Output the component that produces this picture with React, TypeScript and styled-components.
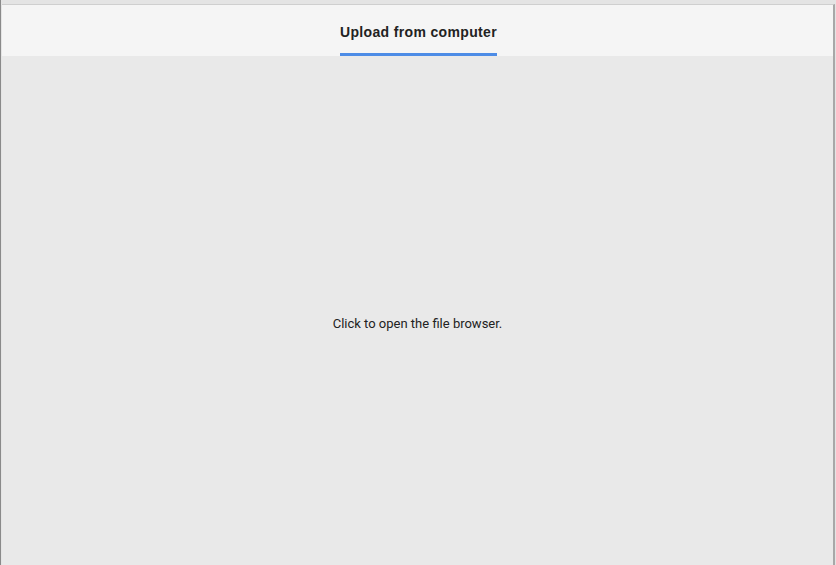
import styled, { createGlobalStyle } from "styled-components";

const Global = createGlobalStyle`
  html, body {
    margin: 0;
    padding: 0;
    background: #e4e4e4;
  }
  #root {
    height: 565px;
  }
`;

const Frame = styled.div`
  height: 565px;
  box-sizing: border-box;
  padding: 4px 1px 0 1px;
  border-left: 1px solid #8a8a8a;
  background: #e4e4e4;
  display: flex;
`;

const Dialog = styled.div`
  flex: 1;
  display: flex;
  flex-direction: column;
  border-top: 1px solid #cfcfcf;
  border-right: 2px solid #a8a8a8;
  background: #e9e9e9;
`;

const TabBar = styled.div`
  height: 51px;
  background: #f5f5f5;
  display: flex;
  justify-content: center;
  align-items: stretch;
`;

const Tab = styled.div<{ $active?: boolean }>`
  display: flex;
  align-items: center;
  box-sizing: border-box;
  padding-top: 6px;
  margin-left: 2px;
  font-family: Arial, "Liberation Sans", sans-serif;
  font-weight: bold;
  font-size: 14px;
  letter-spacing: 0.35px;
  color: #222;
  border-bottom: 3px solid ${(p) => (p.$active ? "#4d8ce6" : "transparent")};
`;

const DropArea = styled.div`
  flex: 1;
  display: flex;
  align-items: center;
  justify-content: center;
  padding-top: 26px;
  cursor: pointer;
`;

const Hint = styled.span`
  font-family: Roboto, "Liberation Sans", sans-serif;
  font-size: 13px;
  color: #222;
`;

export default function App() {
  return (
    <>
      <Global />
      <Frame>
        <Dialog>
          <TabBar>
            <Tab $active>Upload from computer</Tab>
          </TabBar>
          <DropArea>
            <Hint>Click to open the file browser.</Hint>
          </DropArea>
        </Dialog>
      </Frame>
    </>
  );
}
